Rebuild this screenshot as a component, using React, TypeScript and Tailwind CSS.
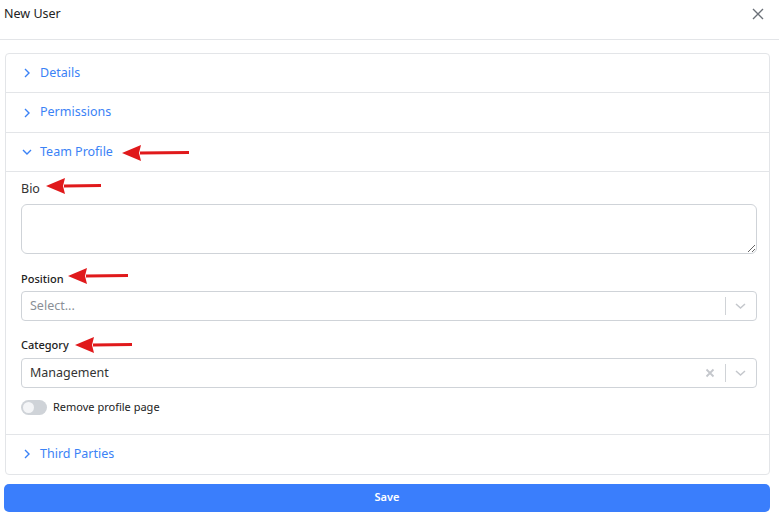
import { useState } from "react";

function Chevron({ open }: { open?: boolean }) {
  return (
    <svg width="10" height="10" viewBox="0 0 10 10" className="shrink-0">
      {open ? (
        <path d="M1 3 L5 7 L9 3" fill="none" stroke="#3b82f6" strokeWidth="1.4" />
      ) : (
        <path d="M3 1 L7 5 L3 9" fill="none" stroke="#3b82f6" strokeWidth="1.4" />
      )}
    </svg>
  );
}

function Arrow({ width }: { width: number }) {
  return (
    <svg width={width} height="18" viewBox={`0 0 ${width} 18`} className="shrink-0">
      <path d={`M18 7.5 L${width} 7 L${width} 10 L18 10.5 Z`} fill="#e0191b" />
      <path d="M0 9 L19 1 L17 9 L19 17 Z" fill="#e0191b" />
    </svg>
  );
}

function SectionHead({
  label,
  open,
  arrow,
  tall,
  last,
}: {
  label: string;
  open?: boolean;
  arrow?: boolean;
  tall?: boolean;
  last?: boolean;
}) {
  return (
    <div
      className={`flex items-center pl-[16px] ${tall ? "h-[40px]" : "h-[39px]"} ${last ? "" : "border-b border-[#e3e5e8]"}`}
    >
      <Chevron open={open} />
      <span className="ml-[8px] text-[12.5px] text-[#3b82f6]">{label}</span>
      {arrow && (
        <span className="ml-[9px] mt-[1px]">
          <Arrow width={67} />
        </span>
      )}
    </div>
  );
}

function SelectBox({ value, clearable }: { value?: string; clearable?: boolean }) {
  return (
    <div className="h-[30px] flex items-center border border-[#cfd3d8] rounded-[4px] pl-[8px] pr-[10px]">
      <span className={`flex-1 text-[12.5px] ${value ? "text-[#333]" : "text-[#8a8f96]"}`}>
        {value ?? "Select..."}
      </span>
      {clearable && (
        <svg width="10" height="10" viewBox="0 0 10 10" className="mr-[10px]">
          <path d="M1.5 1.5 L8.5 8.5 M8.5 1.5 L1.5 8.5" stroke="#c4c7cc" strokeWidth="1.8" />
        </svg>
      )}
      <span className="w-px h-[18px] bg-[#d0d3d7]" />
      <svg width="11" height="8" viewBox="0 0 11 8" className="ml-[9px]">
        <path d="M1 2 L5.5 6 L10 2" fill="none" stroke="#c4c7cc" strokeWidth="1.5" />
      </svg>
    </div>
  );
}

export default function App() {
  const [removeProfile, setRemoveProfile] = useState(false);

  return (
    <div className="w-[779px] h-[520px] bg-white font-['Noto_Sans','Open_Sans',sans-serif] overflow-hidden">
      <div className="h-[40px] flex items-center justify-between pl-[4px] pr-[15px] border-b border-[#e3e5e8]">
        <span className="text-[12.5px] text-[#222] -mt-[11px]">New User</span>
        <svg width="12" height="12" viewBox="0 0 12 12" className="-mt-[12px]">
          <path d="M1 1 L11 11 M11 1 L1 11" stroke="#6b7078" strokeWidth="1.4" />
        </svg>
      </div>

      <div className="mt-[13px] ml-[5px] w-[765px] border border-[#e3e5e8] rounded-[4px]">
        <SectionHead label="Details" />
        <SectionHead label="Permissions" tall />
        <SectionHead label="Team Profile" open arrow />

        <div className="pl-[15px] pr-[12px] pt-[8px] pb-[18px] border-b border-[#e3e5e8]">
          <div className="flex items-center h-[18px]">
            <span className="text-[12.5px] text-[#333]">Bio</span>
            <span className="ml-[6px] -mt-[6px]">
              <Arrow width={55} />
            </span>
          </div>
          <textarea className="mt-[6px] block w-full h-[50px] border border-[#cfd3d8] rounded-[6px] resize-y outline-none" />

          <div className="flex items-center h-[18px] mt-[16px]">
            <span className="text-[11px] font-medium text-[#222]">Position</span>
            <span className="ml-[4px] -mt-[6px]">
              <Arrow width={60} />
            </span>
          </div>
          <div className="mt-[3px]">
            <SelectBox />
          </div>

          <div className="flex items-center h-[18px] mt-[15px]">
            <span className="text-[11px] font-medium text-[#222]">Category</span>
            <span className="ml-[6px] -mt-[1px]">
              <Arrow width={57} />
            </span>
          </div>
          <div className="mt-[4px]">
            <SelectBox value="Management" clearable />
          </div>

          <label className="mt-[11px] flex items-center gap-[6px] cursor-pointer">
            <button
              type="button"
              onClick={() => setRemoveProfile(!removeProfile)}
              className={`w-[26px] h-[15px] rounded-full p-[2px] flex ${removeProfile ? "bg-[#3b82f6] justify-end" : "bg-[#cfd3d8] justify-start"}`}
            >
              <span className="w-[11px] h-[11px] rounded-full bg-[#f4f5f7]" />
            </button>
            <span className="text-[11px] text-[#222]">Remove profile page</span>
          </label>
        </div>

        <SectionHead label="Third Parties" last />
      </div>

      <button className="mt-[9px] ml-[4px] w-[766px] h-[28px] rounded-[5px] bg-[#3a7efc] text-white text-[11px] font-semibold">
        Save
      </button>
    </div>
  );
}
